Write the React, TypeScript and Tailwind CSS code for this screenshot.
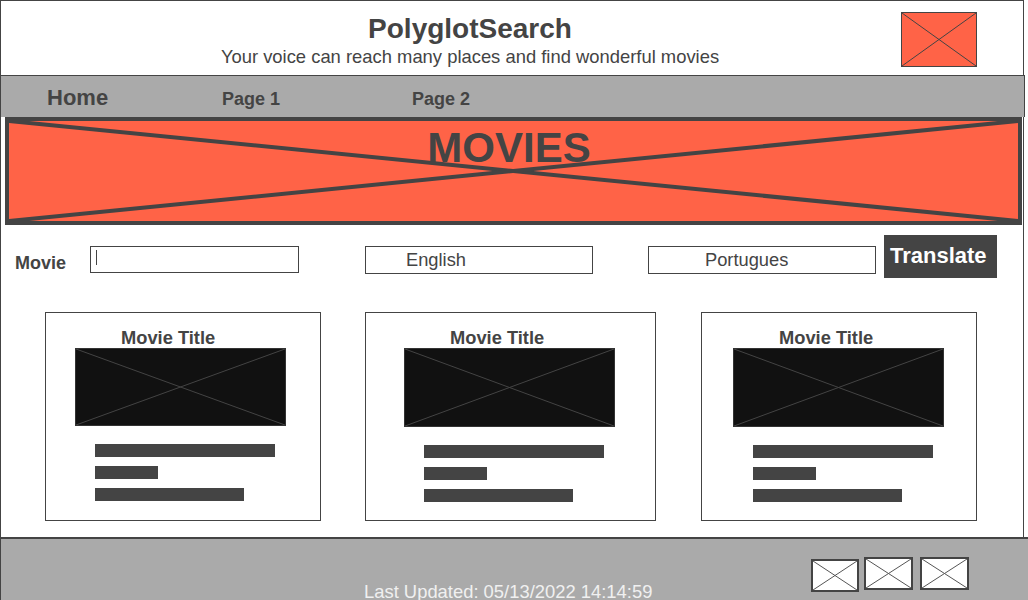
import React from 'react';

const CrossBox: React.FC<{ className: string; stroke: string; width?: number }> = ({ className, stroke, width = 1 }) => (
  <div className={`relative ${className}`}>
    <svg className="absolute inset-0 w-full h-full" preserveAspectRatio="none" viewBox="0 0 100 100">
      <line x1="0" y1="0" x2="100" y2="100" stroke={stroke} strokeWidth={width} vectorEffect="non-scaling-stroke" />
      <line x1="100" y1="0" x2="0" y2="100" stroke={stroke} strokeWidth={width} vectorEffect="non-scaling-stroke" />
    </svg>
  </div>
);

const MovieCard: React.FC<{ width: string; pad: string; tall?: boolean }> = ({ width, pad, tall }) => (
  <div className={`${width} h-[209px] border border-[#444] bg-white flex flex-col pt-[14px] ${pad}`}>
    <div className="pl-[46px] text-[18.3px] font-bold text-[#444] leading-[21px] whitespace-nowrap">Movie Title</div>
    <CrossBox className={`w-[211px] ${tall ? 'h-[79px]' : 'h-[78px]'} bg-[#111] border border-[#333]`} stroke="#444" />
    <div className="flex flex-col gap-[9px] pl-[20px] mt-[18px]">
      <div className="w-[180px] h-[13px] bg-[#444]" />
      <div className="w-[63px] h-[13px] bg-[#444]" />
      <div className="w-[149px] h-[13px] bg-[#444]" />
    </div>
  </div>
);

const App: React.FC = () => {
  return (
    <div className="w-[1028px] h-[600px] flex flex-col bg-white overflow-hidden font-['Liberation_Sans',Arial,sans-serif] text-[#444]">
      {/* Main frame */}
      <div className="w-[1024px] h-[537px] shrink-0 border-l border-r border-t border-[#444] flex flex-col">
        {/* Header */}
        <header className="h-[74px] flex items-start">
          <div className="w-[900px] pl-[38px] pt-[12px] text-center">
            <h1 className="text-[28px] font-bold leading-[32px]">PolyglotSearch</h1>
            <p className="mt-[1px] text-[18.4px] leading-[21px] whitespace-nowrap">Your voice can reach many places and find wonderful movies</p>
          </div>
          <CrossBox className="w-[76px] h-[55px] mt-[11px] bg-[#ff6347] border border-[#444]" stroke="#444" />
        </header>

        {/* Nav */}
        <nav className="h-[42px] -mr-[2px] border-t border-r border-[#444] bg-[#aaaaaa] flex items-baseline pt-[9px] pl-[46px] font-bold">
          <span className="w-[175px] text-[22px] leading-[25px]">Home</span>
          <span className="w-[190px] text-[18px] leading-[21px]">Page 1</span>
          <span className="text-[18px] leading-[21px]">Page 2</span>
        </nav>

        {/* Banner */}
        <div className="relative h-[108px] ml-[4px] mr-[1px] border-[4px] border-[#444] bg-[#ff6347]">
          <svg className="absolute inset-0 w-full h-full" preserveAspectRatio="none" viewBox="0 0 100 100">
            <line x1="0" y1="0" x2="100" y2="100" stroke="#444" strokeWidth="4" vectorEffect="non-scaling-stroke" />
            <line x1="100" y1="0" x2="0" y2="100" stroke="#444" strokeWidth="4" vectorEffect="non-scaling-stroke" />
          </svg>
          <div className="relative text-center pt-[3px] pr-[9px] text-[42px] font-bold leading-[48px]">MOVIES</div>
        </div>

        {/* Translate row */}
        <div className="flex items-start mt-[10px] pl-[14px]">
          <span className="w-[75px] mt-[18px] text-[18px] font-bold leading-[21px]">Movie</span>
          <div className="w-[209px] h-[27px] mt-[11px] border border-[#444] bg-white pl-[5px] pt-[3px]">
            <div className="w-px h-[15px] bg-[#444]" />
          </div>
          <div className="w-[228px] h-[28px] ml-[66px] mt-[11px] border border-[#444] pl-[40px] text-[18.3px] leading-[25px]">English</div>
          <div className="w-[228px] h-[28px] ml-[55px] mt-[11px] border border-[#444] pl-[56px] text-[18.3px] leading-[25px]">Portugues</div>
          <button className="w-[113px] h-[43px] ml-[8px] bg-[#444] text-white text-left pl-[6px] pt-[8px] flex items-start text-[22px] font-bold leading-[25px]">
            Translate
          </button>
        </div>

        {/* Cards */}
        <div className="flex items-start mt-[34px] pl-[44px]">
          <MovieCard width="w-[276px]" pad="pl-[29px]" />
          <div className="ml-[44px]">
            <MovieCard width="w-[291px]" pad="pl-[38px]" tall />
          </div>
          <div className="ml-[45px]">
            <MovieCard width="w-[276px]" pad="pl-[31px]" tall />
          </div>
        </div>
      </div>

      {/* Footer */}
      <footer className="flex-1 min-h-0 overflow-hidden border-t-2 border-l border-[#444] bg-[#aaaaaa] flex items-start">
        <span className="w-[287px] shrink-0 ml-[363px] mt-[42px] text-[18.4px] leading-[21px] text-[#f0f0f0] whitespace-nowrap">Last Updated: 05/13/2022 14:14:59</span>
        <CrossBox className="w-[48px] h-[33px] ml-[160px] mt-[20px] bg-white border-2 border-[#444]" stroke="#555" />
        <CrossBox className="w-[49px] h-[33px] ml-[5px] mt-[18px] bg-white border-2 border-[#444]" stroke="#555" />
        <CrossBox className="w-[49px] h-[33px] ml-[7px] mt-[18px] bg-white border-2 border-[#444]" stroke="#555" />
      </footer>
    </div>
  );
};

export default App;
